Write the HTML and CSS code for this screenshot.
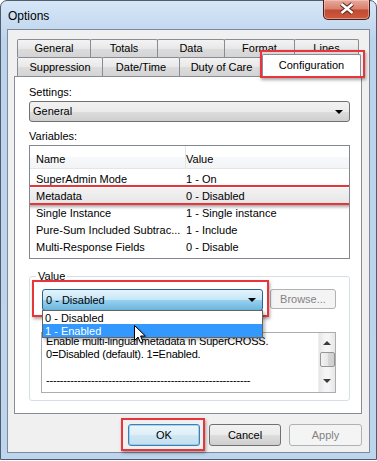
FILE: index.html
```html
<!DOCTYPE html>
<html lang="en">
<head>
<meta charset="UTF-8">
<title>Options</title>
<link rel="stylesheet" href="styles.css">
</head>
<body>

<div class="window">
  <div class="titlebar">
    <span class="title">Options</span>
    <div class="close-btn">
      <svg width="47" height="20" viewBox="0 0 47 20">
        <path d="M18.5 5 L29.5 14 M29.5 5 L18.5 14" stroke="#5b2118" stroke-width="4.6" fill="none"/>
        <path d="M18.5 5 L29.5 14 M29.5 5 L18.5 14" stroke="#fff" stroke-width="2.6" fill="none"/>
      </svg>
    </div>
  </div>

  <div class="client">
    <div class="tabs">
      <div class="tab-row back">
        <div class="tab t-general">General</div>
        <div class="tab t-totals">Totals</div>
        <div class="tab t-data">Data</div>
        <div class="tab t-format">Format</div>
        <div class="tab t-lines">Lines</div>
      </div>
      <div class="tab-row front">
        <div class="tab t-suppression">Suppression</div>
        <div class="tab t-datetime">Date/Time</div>
        <div class="tab t-duty">Duty of Care</div>
        <div class="tab active">Configuration<span class="mark mark-tab"></span></div>
      </div>
    </div>

    <div class="pane">
      <div class="label">Settings:</div>
      <div class="combo">General<span class="arrow"></span></div>

      <div class="label variables">Variables:</div>
      <div class="listview">
        <div class="lv-head">
          <span class="col-name">Name</span>
          <span class="col-value">Value</span>
        </div>
        <div class="lv-body">
          <div class="lv-row"><span class="col-name">SuperAdmin Mode</span><span>1 - On</span></div>
          <div class="lv-row selected"><span class="col-name">Metadata</span><span>0 - Disabled</span><span class="mark mark-row"></span></div>
          <div class="lv-row"><span class="col-name">Single Instance</span><span>1 - Single instance</span></div>
          <div class="lv-row"><span class="col-name">Pure-Sum Included Subtrac...</span><span>1 - Include</span></div>
          <div class="lv-row"><span class="col-name">Multi-Response Fields</span><span>0 - Disable</span></div>
        </div>
      </div>

      <div class="group">
        <div class="group-legend">Value</div>
        <div class="value-row">
          <div class="value-combo">
            <div class="combo open">0 - Disabled<span class="arrow"></span></div>
            <ul class="dropdown">
              <li>0 - Disabled</li>
              <li class="hot">1 - Enabled</li>
            </ul>
            <span class="mark mark-combo"></span>
            <svg class="cursor" width="13" height="20" viewBox="0 0 13 20">
              <path d="M1.5 1.5 V16.5 L5 13 L7.5 18.8 L10 17.8 L7.6 12 H12.3 Z" fill="#fff" stroke="#000" stroke-width="1" stroke-linejoin="round"/>
            </svg>
          </div>
          <div class="btn disabled browse">Browse...</div>
        </div>
        <div class="desc">
          <div class="desc-text">
            Enable multi-lingual metadata in SuperCROSS.<br>
            0=Disabled (default). 1=Enabled.<br>
            <br>
            -----------------------------------------------------------
          </div>
          <div class="scrollbar">
            <span class="sb-up"></span>
            <span class="sb-thumb"></span>
            <span class="sb-down"></span>
          </div>
        </div>
      </div>
    </div>

    <div class="buttons">
      <div class="btn default">OK<span class="mark mark-ok"></span></div>
      <div class="btn">Cancel</div>
      <div class="btn disabled">Apply</div>
    </div>
  </div>
</div>

</body>
</html>
```

FILE: styles.css
```css
* {
  box-sizing: border-box;
}

body {
  margin: 0;
  background: #fff;
  font-family: "Liberation Sans", Arial, sans-serif;
  font-size: 11px;
  color: #000;
}

/* window frame */
.window {
  width: 377px;
  height: 460px;
  border: 1px solid #4f5d6d;
  border-radius: 7px 7px 0 0;
  background: linear-gradient(#d6e6f7, #bcd3ed 40px, #bed5ee);
  padding: 0 6px 6px 6px;
  display: flex;
  flex-direction: column;
}

.titlebar {
  height: 28px;
  display: flex;
  align-items: flex-start;
}

.title {
  font-size: 12px;
  margin: 8px 0 0 1px;
  line-height: 14px;
}

.close-btn {
  margin-left: auto;
  margin-top: -1px;
  width: 47px;
  height: 20px;
  border: 1px solid #4a1d16;
  border-top: none;
  border-radius: 0 0 5px 5px;
  background: linear-gradient(#e9a99d, #d8826f 45%, #c24a33 55%, #cc5b3f);
  box-shadow: inset 0 0 0 1px rgba(255, 220, 210, 0.45);
}

.close-btn svg {
  display: block;
  margin: -1px 0 0 -1px;
}

/* client area */
.client {
  flex: 1;
  border: 1px solid #7e8a98;
  background: #f0f0f0;
  padding: 9px 7px 6px 6px;
}

/* tabs */
.tabs {
  padding-left: 3px;
}

.tab-row {
  display: flex;
}

.tab-row.back {
  height: 18px;
}

.tab-row.front {
  height: 19px;
}

.tab {
  position: relative;
  margin-right: -1px;
  border: 1px solid #898c95;
  border-bottom: none;
  border-radius: 2px 2px 0 0;
  background: linear-gradient(#f3f3f3, #e8e8e8 50%, #dcdcdc 51%, #d4d4d4);
  text-align: center;
  line-height: 17px;
}

.back .tab { height: 18px; }
.front .tab { height: 19px; line-height: 19px; }

.t-general { width: 74px; }
.t-totals { width: 68px; }
.t-data { width: 68px; }
.t-format { width: 71px; }
.t-lines { width: 65px; }
.t-suppression { width: 86px; }
.t-datetime { width: 78px; }
.t-duty { width: 85px; }

.front .tab.active {
  width: 99px;
  height: 23px;
  margin-top: -3px;
  margin-left: -1px;
  background: #fff;
  z-index: 1;
  line-height: 20px;
}

/* tab page */
.pane {
  height: 338px;
  border: 1px solid #898c95;
  background: #fff;
  padding: 9px 11px 0 14px;
}

.label {
  line-height: 13px;
}

.label.variables {
  margin-top: 8px;
}

.combo {
  position: relative;
  height: 21px;
  margin-top: 2px;
  border: 1px solid #707070;
  border-radius: 3px;
  background: linear-gradient(#f2f2f2, #ebebeb 50%, #dddddd 51%, #cfcfcf);
  line-height: 19px;
  padding-left: 3px;
}

.arrow {
  position: absolute;
  right: 6px;
  top: 8px;
  border-left: 4px solid transparent;
  border-right: 4px solid transparent;
  border-top: 4px solid #000;
}

/* list view */
.listview {
  margin-top: 2px;
  height: 114px;
  border: 1px solid #828790;
  overflow: hidden;
}

.lv-head {
  display: flex;
  height: 23px;
  border-bottom: 1px solid #e5e5e5;
  background: linear-gradient(#fff, #fff 50%, #f7f8f9 51%, #f3f4f6);
  line-height: 15px;
  padding-top: 6px;
}

.lv-head .col-name {
  border-right: 1px solid #e5e5e5;
  margin-top: -6px;
  padding-top: 6px;
  height: 22px;
}

.col-name {
  width: 156px;
  padding-left: 6px;
  white-space: nowrap;
}

.lv-body {
  padding-top: 2px;
}

.lv-row {
  position: relative;
  display: flex;
  height: 17px;
  line-height: 17px;
}

.lv-row .col-name {
  width: 156px;
}

.lv-row.selected {
  background: linear-gradient(#f2f2f2, #e5e5e5);
}

/* value group */
.group {
  margin-top: 17px;
  height: 125px;
  border: 1px solid #d5dfe5;
  border-radius: 3px;
  padding: 0 13px 8px 12px;
}

.group-legend {
  width: max-content;
  margin: -7px 0 0 -6px;
  padding: 0 2px;
  background: #fff;
  line-height: 13px;
}

.value-row {
  display: flex;
  align-items: flex-start;
  gap: 7px;
  margin-top: 6px;
}

.value-combo {
  position: relative;
  width: 221px;
  z-index: 2;
}

.combo.open {
  margin-top: 0;
  height: 22px;
  border-color: #2c628b;
  background: linear-gradient(#e5f4fc, #c4e5f6 50%, #98d1ef 51%, #6cb6dd);
  line-height: 20px;
}

.dropdown {
  position: absolute;
  left: 0;
  top: 21px;
  z-index: 4;
  width: 221px;
  margin: 0;
  padding: 0;
  list-style: none;
  border: 1px solid #646464;
  background: #fff;
  box-shadow: 2px 2px 3px rgba(0, 0, 0, 0.28);
}

.dropdown li {
  height: 13px;
  line-height: 14px;
  padding-left: 2px;
}

.dropdown li.hot {
  background: #3399ff;
  color: #fff;
}

.cursor {
  position: absolute;
  left: 91px;
  top: 35px;
  z-index: 5;
  filter: drop-shadow(1px 1px 1px rgba(0, 0, 0, 0.3));
}

.desc {
  position: relative;
  margin: 21px 0 0 -1px;
  height: 61px;
  border: 1px solid #abadb3;
  overflow: hidden;
}

.desc-text {
  padding: 2px 0 0 4px;
  line-height: 13px;
  white-space: nowrap;
  letter-spacing: -0.2px;
}

.scrollbar {
  position: absolute;
  right: 0;
  top: 0;
  bottom: 0;
  width: 17px;
  background: linear-gradient(90deg, #e7e7e7, #f5f5f5 40%, #f5f5f5 60%, #e7e7e7);
  border-left: 1px solid #efefef;
}

.sb-up,
.sb-down {
  position: absolute;
  left: 4px;
  border-left: 4px solid transparent;
  border-right: 4px solid transparent;
}

.sb-up {
  top: 8px;
  border-bottom: 4px solid #3c3c3c;
}

.sb-down {
  bottom: 9px;
  border-top: 4px solid #3c3c3c;
}

.sb-thumb {
  position: absolute;
  left: 1px;
  top: 19px;
  width: 15px;
  height: 15px;
  border: 1px solid #959595;
  border-radius: 2px;
  background: linear-gradient(90deg, #f3f3f3, #e6e6e6 50%, #d6d6d6 51%, #cfcfcf);
}

/* buttons */
.buttons {
  display: flex;
  justify-content: flex-end;
  margin-top: 10px;
}

.btn {
  position: relative;
  width: 72px;
  height: 22px;
  margin-left: 9px;
  border: 1px solid #707070;
  border-radius: 3px;
  background: linear-gradient(#f2f2f2, #ebebeb 50%, #dddddd 51%, #cfcfcf);
  text-align: center;
  line-height: 20px;
}

.btn.default {
  border-color: #3c7fb1;
  background: linear-gradient(#eaf5fb, #dfeff8 50%, #cfe6f3 51%, #c3dfee);
  box-shadow: inset 0 0 0 1px rgba(120, 190, 235, 0.6);
}

.btn.disabled {
  border-color: #adb2b5;
  background: #f4f4f4;
  color: #838383;
}

.buttons .btn:last-child {
  width: 73px;
  margin-left: 8px;
}

.btn.browse {
  width: 66px;
  height: 20px;
  margin-left: 0;
  line-height: 18px;
}

/* red highlight marks */
.mark {
  position: absolute;
  border: 2px solid #e8353b;
  box-shadow: 1px 2px 3px rgba(0, 0, 0, 0.35);
  pointer-events: none;
  z-index: 3;
}

.mark-tab { left: -3px; right: -5px; top: -5px; bottom: -1px; }
.mark-row { left: -4px; right: -3px; top: -3px; bottom: 0; }
.mark-combo { left: -10px; right: -6px; top: -9px; bottom: -6px; }
.mark-ok { left: -8px; right: -6px; top: -7px; bottom: -6px; }
```
